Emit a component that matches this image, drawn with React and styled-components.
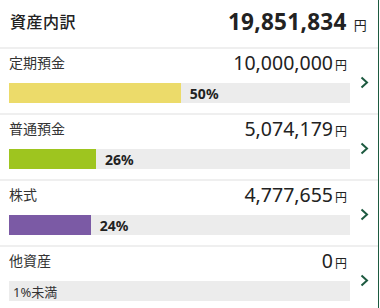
import styled, { createGlobalStyle } from 'styled-components'

const GlobalStyle = createGlobalStyle`
  body {
    margin: 0;
    background: #fff;
    font-family: "Noto Sans", "Noto Sans CJK JP", sans-serif;
    color: #222;
  }
`

const assets = [
  { label: '定期預金', amount: '10,000,000', percent: 50, fill: 50.4, color: '#ecdb6a' },
  { label: '普通預金', amount: '5,074,179', percent: 26, fill: 25.5, color: '#9ec51f' },
  { label: '株式', amount: '4,777,655', percent: 24, fill: 24, color: '#7b5aa5' },
  { label: '他資産', amount: '0', percent: null, fill: 0, color: 'transparent' },
]

export default function App() {
  return (
    <Panel>
      <GlobalStyle />
      <Header>
        <Title>資産内訳</Title>
        <Total>
          19,851,834<TotalYen>円</TotalYen>
        </Total>
      </Header>
      { assets.map(a => <AssetRow key={a.label} {...a} />) }
    </Panel>
  )
}

// components
const Chevron = () => (
  <svg width="9" height="13" viewBox="0 0 9 13">
    <path d="M1.5 1.5 L7 6.5 L1.5 11.5" fill="none" stroke="#1d5a40" strokeWidth="2" />
  </svg>
)

const AssetRow = ({ label, amount, percent, fill, color }) => (
  <Row>
    <Body>
      <Line>
        <Label>{ label }</Label>
        <Amount>{ amount }<Yen>円</Yen></Amount>
      </Line>
      <Bar>
        <Fill $color={color} style={{ width: `${fill}%` }} />
        { percent === null
          ? <Under>1%未満</Under>
          : <Percent>{ percent }%</Percent> }
      </Bar>
    </Body>
    <Arrow><Chevron /></Arrow>
  </Row>
)

// style
const Panel = styled.div`
  width: 378px;
  height: 308px;
  border-right: 1px solid #1d5a40;
  overflow: hidden;
  background: #fff;
`

const Header = styled.div`
  height: 47px;
  display: flex;
  align-items: center;
  justify-content: space-between;
  padding: 0 11px 5px 10px;
  box-sizing: border-box;
`

const Title = styled.div`
  font-size: 16px;
  font-weight: 500;
  letter-spacing: 0.5px;
`

const Total = styled.div`
  font-size: 22.5px;
  font-weight: 700;
  display: flex;
  align-items: baseline;
  letter-spacing: 0.3px;
`

const TotalYen = styled.span`
  font-size: 13px;
  font-weight: 400;
  margin-left: 7px;
`

const Row = styled.div`
  display: flex;
  align-items: center;
  border-top: 2px solid #efefef;
  height: 66px;
  box-sizing: border-box;
`

const Body = styled.div`
  flex: 1;
  align-self: flex-start;
  padding: 1px 0 0 9px;
  display: flex;
  flex-direction: column;
  gap: 9px;
`

const Line = styled.div`
  display: flex;
  align-items: center;
  justify-content: space-between;
  height: 24px;
  padding-right: 3px;
`

const Label = styled.div`
  font-size: 14px;
  color: #333;
`

const Amount = styled.div`
  font-size: 19.5px;
  display: flex;
  align-items: baseline;
`

const Yen = styled.span`
  font-size: 12px;
  margin-left: 2px;
`

const Bar = styled.div`
  height: 20px;
  background: #ececec;
  display: flex;
  align-items: center;
`

const Fill = styled.div`
  height: 100%;
  background: ${({ $color }) => $color};
`

const Percent = styled.span`
  font-size: 14px;
  font-weight: 700;
  margin-left: 9px;
`

const Under = styled.span`
  font-size: 13px;
  margin-left: 4px;
  color: #333;
`

const Arrow = styled.div`
  width: 28px;
  display: flex;
  justify-content: center;
  padding-top: 2px;
`
